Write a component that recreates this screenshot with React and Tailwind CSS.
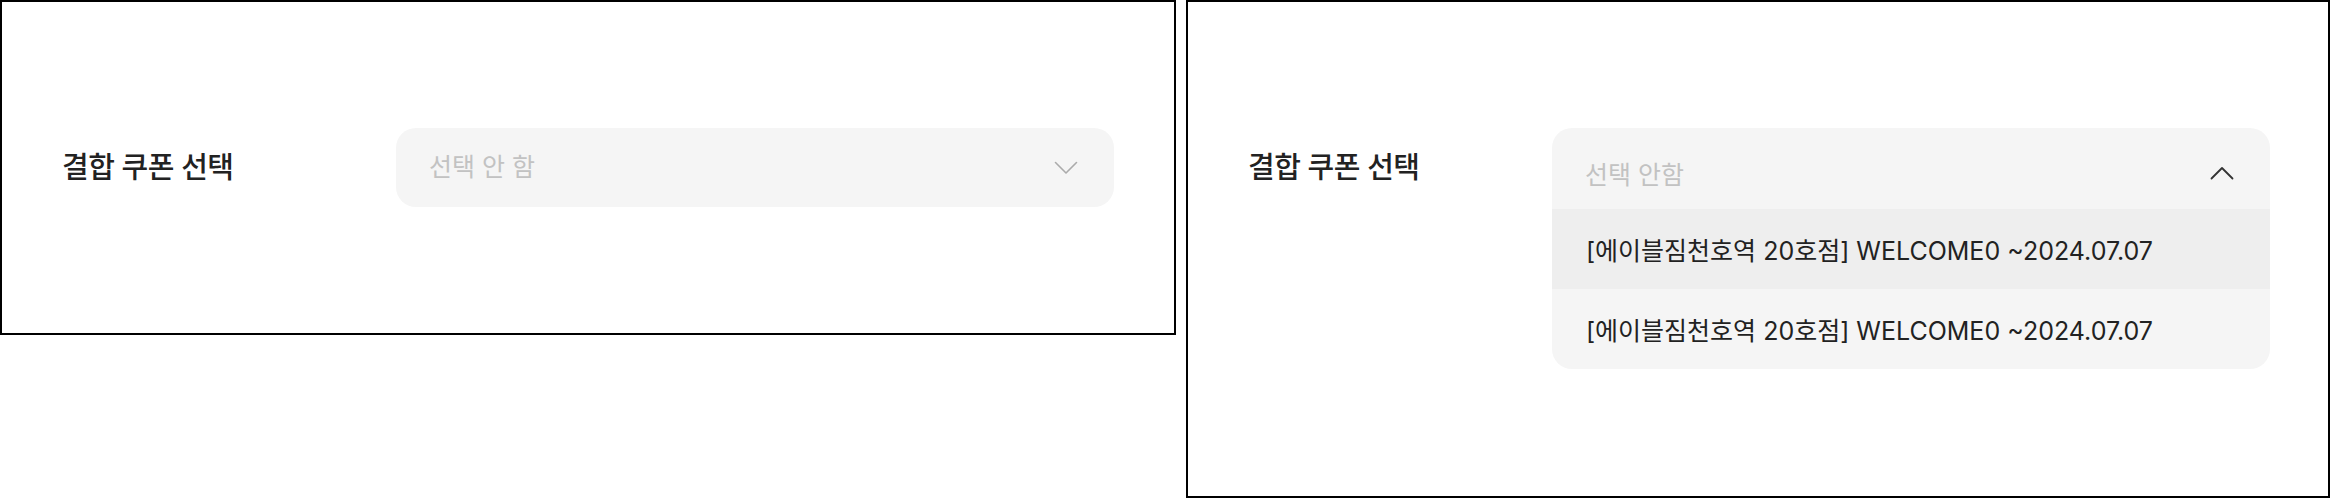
const font = { fontFamily: 'Inter, "Noto Sans CJK KR", sans-serif' };

const ChevronDown = ({ className }) => (
  <svg width="24" height="14" viewBox="0 0 24 14" fill="none" className={className}>
    <path d="M1.5 1.5 L12 12 L22.5 1.5" stroke="currentColor" strokeWidth="1.6" strokeLinecap="round" strokeLinejoin="round" />
  </svg>
);

const ChevronUp = ({ className }) => (
  <svg width="24" height="14" viewBox="0 0 24 14" fill="none" className={className}>
    <path d="M1.5 12.5 L12 2 L22.5 12.5" stroke="currentColor" strokeWidth="1.8" strokeLinecap="round" strokeLinejoin="round" />
  </svg>
);

const coupons = [
  "[에이블짐천호역 20호점] WELCOME0 ~2024.07.07",
  "[에이블짐천호역 20호점] WELCOME0 ~2024.07.07",
];

const Label = () => (
  <div className="h-[79px] flex items-center text-[29px] font-medium tracking-[-0.5px] text-[#222222]">
    결합 쿠폰 선택
  </div>
);

export default function App() {
  return (
    <div className="w-[2330px] h-[498px] bg-white flex items-start gap-[10px]" style={font}>
      {/* closed */}
      <div className="w-[1176px] h-[335px] border-2 border-black flex items-center justify-between pl-[60px] pr-[60px]">
        <Label />
        <div className="w-[718px] h-[79px] rounded-[20px] bg-[#f5f5f5] flex items-center justify-between pl-[33px] pr-[36px]">
          <span className="text-[25px] text-[#c2c2c2]">선택 안 함</span>
          <ChevronDown className="text-[#ababab]" />
        </div>
      </div>

      {/* open */}
      <div className="w-[1144px] h-[498px] border-2 border-black flex items-start justify-between pl-[60px] pr-[58px] pt-[126px]">
        <Label />
        <div className="w-[718px] rounded-[20px] bg-[#f5f5f5] overflow-hidden">
          <div className="h-[81px] flex items-center justify-between pl-[33px] pr-[36px] pt-[14px]">
            <span className="text-[25px] text-[#c2c2c2]">선택 안함</span>
            <ChevronUp className="text-[#333333] -mt-[5px]" />
          </div>
          {coupons.map((c, i) => (
            <div
              key={i}
              className={`h-[80px] flex items-center pl-[34px] pt-[5px] text-[25px] text-[#222222] ${i === 0 ? "bg-[#eeeeee]" : ""}`}
            >
              {c}
            </div>
          ))}
        </div>
      </div>
    </div>
  );
}
